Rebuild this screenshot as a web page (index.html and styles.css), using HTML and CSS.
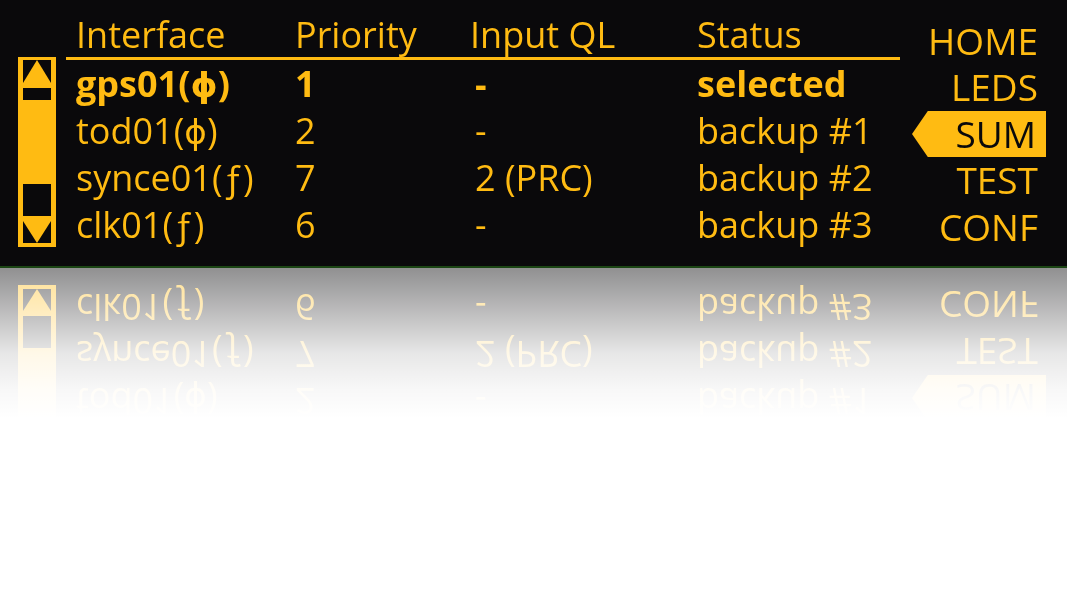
FILE: index.html
```html
<!DOCTYPE html>
<html lang="en">
<head>
<meta charset="utf-8">
<title>Interface summary</title>
<link rel="stylesheet" href="styles.css">
</head>
<body>
<div class="panel">
  <div class="scroll-col">
    <svg class="scrollbar" width="38" height="190" viewBox="0 0 38 190">
      <rect x="0" y="0" width="38" height="190" fill="#ffbb12"/>
      <polygon points="5,3 19,3 5,26" fill="#0a090b"/>
      <polygon points="19,3 33,3 33,26" fill="#0a090b"/>
      <rect x="5" y="31" width="28" height="12" fill="#0a090b"/>
      <rect x="5" y="127" width="28" height="32" fill="#0a090b"/>
      <polygon points="5,164 19,186 5,186" fill="#0a090b"/>
      <polygon points="33,164 33,186 19,186" fill="#0a090b"/>
    </svg>
  </div>
  <div class="table">
    <div class="row head">
      <span>Interface</span><span>Priority</span><span>Input QL</span><span>Status</span>
    </div>
    <div class="row bold">
      <span>gps01(<span class="sym">ϕ</span>)</span><span>1</span><span class="ql">-</span><span>selected</span>
    </div>
    <div class="row">
      <span>tod01(<span class="sym">ϕ</span>)</span><span>2</span><span class="ql">-</span><span>backup #1</span>
    </div>
    <div class="row">
      <span>synce01(<span class="fl">ƒ</span>)</span><span>7</span><span class="ql">2 (PRC)</span><span>backup #2</span>
    </div>
    <div class="row">
      <span>clk01(<span class="fl">ƒ</span>)</span><span>6</span><span class="ql">-</span><span>backup #3</span>
    </div>
  </div>
  <nav class="menu">
    <div class="item">HOME</div>
    <div class="item">LEDS</div>
    <div class="item active">SUM</div>
    <div class="item">TEST</div>
    <div class="item">CONF</div>
  </nav>
</div>
<div class="floor"></div>
</body>
</html>
```

FILE: styles.css
```css
html, body {
  margin: 0;
  padding: 0;
  background: #ffffff;
}

body {
  width: 1067px;
  height: 591px;
  overflow: hidden;
  font-family: "Open Sans", "DejaVu Sans", sans-serif;
}

.panel {
  height: 266px;
  background: #0a090b;
  color: #ffbb12;
  display: flex;
  -webkit-box-reflect: below 0px;
}

.scroll-col {
  width: 48px;
  padding: 57px 0 0 18px;
}

.scrollbar {
  display: block;
}

.table {
  width: 834px;
}

.row {
  display: grid;
  grid-template-columns: 219px 175px 227px 1fr;
  padding-left: 10px;
  font-size: 36px;
  line-height: 47px;
  height: 47px;
  white-space: nowrap;
}

.row.head {
  padding-top: 13px;
  line-height: 44px;
  height: 44px;
  border-bottom: 3px solid #ffbb12;
}

.row.bold {
  font-weight: 700;
}

.ql {
  padding-left: 5px;
}

.sym {
  font-family: "DejaVu Sans", sans-serif;
  font-size: 0.95em;
  line-height: 0;
}

.fl {
  line-height: 0;
}

.menu {
  flex: 1;
  padding-top: 18px;
  display: flex;
  flex-direction: column;
  align-items: flex-end;
}

.item {
  width: 126px;
  margin-right: 21px;
  padding-right: 8px;
  text-align: right;
  font-size: 37px;
  line-height: 46.4px;
  height: 46.4px;
}

.item.active {
  background: #ffbb12;
  color: #0a090b;
  padding-right: 10px;
  width: 124px;
  clip-path: polygon(0 50%, 16px 0, 100% 0, 100% 100%, 16px 100%);
}

.floor {
  position: relative;
  z-index: 1;
  height: 323px;
  border-top: 2px solid #1b4514;
  background: linear-gradient(to bottom, rgba(255, 255, 255, 0.55) 0px, rgba(255, 255, 255, 0.9) 85px, rgba(255, 255, 255, 0.97) 120px, #ffffff 150px);
}
```
